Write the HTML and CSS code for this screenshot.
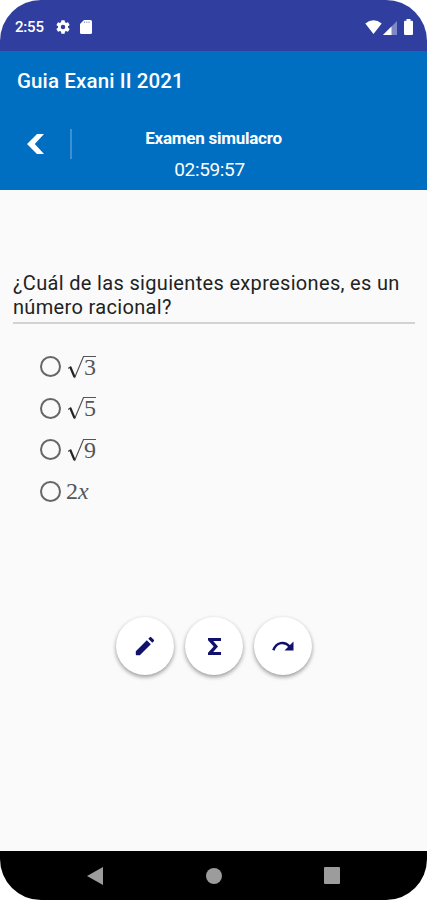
FILE: index.html
```html
<!DOCTYPE html>
<html lang="es">
<head>
    <meta charset="UTF-8">
    <meta name="viewport" content="width=device-width, initial-scale=1.0">
    <title>Guia Exani II 2021</title>
    <link rel="stylesheet" href="styles.css">
</head>
<body>

    <div class="phone">
        <div class="status-bar">
            <span class="clock">2:55</span>
            <svg class="gear" width="14" height="14" viewBox="2 2 20 20"><path fill="#fff" d="M19.14 12.94a7 7 0 0 0 0-1.88l2.03-1.58a.5.5 0 0 0 .12-.61l-1.92-3.32a.5.5 0 0 0-.59-.22l-2.39.96a7 7 0 0 0-1.62-.94l-.36-2.54a.5.5 0 0 0-.48-.41h-3.84a.5.5 0 0 0-.47.41l-.36 2.54a7 7 0 0 0-1.62.94l-2.39-.96a.5.5 0 0 0-.59.22L2.74 8.87a.5.5 0 0 0 .12.61l2.03 1.58a7 7 0 0 0 0 1.88l-2.03 1.58a.5.5 0 0 0-.12.61l1.92 3.32c.12.22.37.29.59.22l2.39-.96c.5.38 1.03.7 1.62.94l.36 2.54c.05.24.24.41.48.41h3.84c.24 0 .44-.17.47-.41l.36-2.54a7 7 0 0 0 1.62-.94l2.39.96c.22.08.47 0 .59-.22l1.92-3.32a.5.5 0 0 0-.12-.61zM12 15.2a3.2 3.2 0 1 1 0-6.4 3.2 3.2 0 0 1 0 6.4z"/></svg>
            <svg class="sd-card" width="12" height="14" viewBox="0 0 12 14"><path fill="#fff" d="M4 0h6.5Q12 0 12 1.5v11Q12 14 10.500 14h-9Q0 14 0 12.500V4z"/><path stroke="#8f97d0" stroke-width="1" d="M4.500 1.500v1.500M6.800 1.500v1.500M9 1.500v1.500"/></svg>
            <svg class="wifi" width="17" height="14" viewBox="0 0 17 14"><path fill="#fff" d="M.3 3.600Q8.500-3 16.700 3.600L8.500 14z"/></svg>
            <svg class="signal" width="14" height="14" viewBox="0 0 14 14"><path fill="#7f88c4" d="M14 0v14H0z"/><path fill="#fff" d="M8.500 5.500V14H0z"/></svg>
            <svg class="battery" width="9" height="16" viewBox="0 0 9 16"><path fill="#fff" d="M2.500 0h4v1.800H8Q9 1.800 9 3v11.500Q9 16 8 16H1Q0 16 0 14.500V3Q0 1.800 1 1.800h1.500z"/></svg>
        </div>

        <div class="app-bar">
            <h1>Guia Exani II 2021</h1>
        </div>

        <div class="exam-bar">
            <svg class="back" width="17" height="20" viewBox="0 0 17 20"><path fill="#fff" d="M10 0H17L7.800 10 17 20h-7L0 10z"/></svg>
            <div class="divider"></div>
            <div class="exam-info">
                <div class="exam-name">Examen simulacro</div>
                <div class="timer">02:59:57</div>
            </div>
        </div>

        <main class="content">
            <p class="question">¿Cuál de las siguientes expresiones, es un<br>número racional?</p>

            <div class="options">
                <div class="option">
                    <span class="radio"></span>
                    <svg class="root" width="29" height="24" viewBox="0 0 29 24"><path class="thin" d="M0 13.500l3-2M6.500 23L15.500 1.500h12.500"/><path class="thick" d="M2.300 12L6.500 22"/></svg>
                    <span class="number">3</span>
                </div>
                <div class="option">
                    <span class="radio"></span>
                    <svg class="root" width="29" height="24" viewBox="0 0 29 24"><path class="thin" d="M0 13.500l3-2M6.500 23L15.500 1.500h12.500"/><path class="thick" d="M2.300 12L6.500 22"/></svg>
                    <span class="number">5</span>
                </div>
                <div class="option">
                    <span class="radio"></span>
                    <svg class="root" width="29" height="24" viewBox="0 0 29 24"><path class="thin" d="M0 13.500l3-2M6.500 23L15.500 1.500h12.500"/><path class="thick" d="M2.300 12L6.500 22"/></svg>
                    <span class="number">9</span>
                </div>
                <div class="option">
                    <span class="radio"></span>
                    <span class="term">2<i>x</i></span>
                </div>
            </div>

            <div class="actions">
                <div class="fab">
                    <svg width="20" height="20" viewBox="0 0 20 20"><path fill="#10106e" d="M.8 15.200L11.800 4.200l4 4L4.800 19.200H1.500q-.7 0-.7-.7zM13.300 2.700l1.500-1.500q.7-.7 1.400 0l2.600 2.600q.7.700 0 1.400l-1.500 1.500z"/></svg>
                </div>
                <div class="fab">
                    <svg width="13" height="17" viewBox="0 0 13 17"><path fill="#10106e" d="M0 0h13v3H5.200L10 8.500 5.200 14H13v3H0v-2.300l5.700-6.200L0 2.300z"/></svg>
                </div>
                <div class="fab">
                    <svg width="22" height="12" viewBox="0 0 22 12"><path fill="none" stroke="#10106e" stroke-width="2.500" d="M1.300 10.200C4.300 2.500 12 .2 18 6.800"/><path fill="#10106e" d="M21.500 1.500v9h-9z"/></svg>
                </div>
            </div>
        </main>

        <div class="nav-bar">
            <svg width="16" height="18" viewBox="0 0 16 18"><path fill="#9c9c9c" d="M16 0v18L0 9z"/></svg>
            <svg width="16" height="16" viewBox="0 0 16 16"><circle cx="8" cy="8" r="8" fill="#9c9c9c"/></svg>
            <svg width="16" height="17" viewBox="0 0 16 17"><rect width="16" height="17" rx="1" fill="#9c9c9c"/></svg>
        </div>
    </div>

</body>
</html>
```
FILE: styles.css
```css
* {
    box-sizing: border-box;
}
body {
    margin: 0;
    background: #fff;
    font-family: Roboto, 'Liberation Sans', sans-serif;
}
svg {
    display: block;
    flex-shrink: 0;
}
.phone {
    display: flex;
    flex-direction: column;
    width: 427px;
    height: 900px;
    border-radius: 41px;
    overflow: hidden;
    background: #fafafa;
}
.status-bar {
    display: flex;
    align-items: center;
    height: 51px;
    padding: 2px 14px 0 15px;
    background: #303f9f;
    color: #fff;
}
.clock {
    width: 41px;
    font-size: 15px;
    font-weight: 500;
    letter-spacing: -0.2px;
}
.sd-card {
    margin-left: 10px;
}
.wifi {
    margin-left: auto;
}
.signal {
    margin: 2px 7px 0 1px;
}
.app-bar {
    height: 60px;
    padding: 0 17px;
    background: #006fc2;
    color: #fff;
}
h1 {
    margin: 0;
    font-size: 20.5px;
    font-weight: 500;
    line-height: 60px;
    letter-spacing: 0.12px;
}
.exam-bar {
    display: flex;
    height: 79px;
    padding-left: 27px;
    background: #006fc2;
    color: #fff;
}
.back {
    margin-top: 23px;
}
.divider {
    width: 2px;
    height: 30px;
    margin: 18px 0 0 26px;
    background: #3c91d2;
}
.exam-info {
    flex: 1;
    padding-top: 17px;
    padding-right: 72px;
    text-align: center;
}
.exam-name {
    font-size: 17px;
    font-weight: 700;
    line-height: 20px;
    letter-spacing: -0.25px;
}
.timer {
    padding-right: 8px;
    margin-top: 10px;
    font-size: 19px;
    line-height: 24px;
    letter-spacing: -0.35px;
}
.content {
    flex: 1;
    padding: 81px 12px 0 13px;
}
.question {
    height: 53px;
    margin: 0;
    border-bottom: 2px solid #d2d2d2;
    color: #222;
    font-size: 20px;
    line-height: 24px;
    letter-spacing: 0.33px;
    white-space: nowrap;
}
.options {
    padding: 22px 0 0 27px;
}
.option {
    display: flex;
    align-items: center;
    height: 41.5px;
    color: #555;
    font-family: 'Liberation Serif', serif;
    font-size: 24px;
}
.radio {
    width: 21px;
    height: 21px;
    margin-right: 7px;
    border: 2px solid #666;
    border-radius: 50%;
}
.thin {
    fill: none;
    stroke: #555;
    stroke-width: 1.2;
}
.thick {
    fill: none;
    stroke: #222;
    stroke-width: 2.2;
}
.number {
    margin: 1px 0 0 -13px;
}
.term {
    margin-left: -2px;
}
.actions {
    display: flex;
    justify-content: center;
    gap: 11px;
    margin-top: 105px;
}
.fab {
    display: flex;
    align-items: center;
    justify-content: center;
    width: 58px;
    height: 58px;
    border-radius: 50%;
    background: #fff;
    box-shadow: 0 2px 4px rgba(0, 0, 0, 0.4);
}
.nav-bar {
    display: flex;
    align-items: center;
    justify-content: space-between;
    height: 49px;
    padding: 0 87px;
    background: #000;
}
```
